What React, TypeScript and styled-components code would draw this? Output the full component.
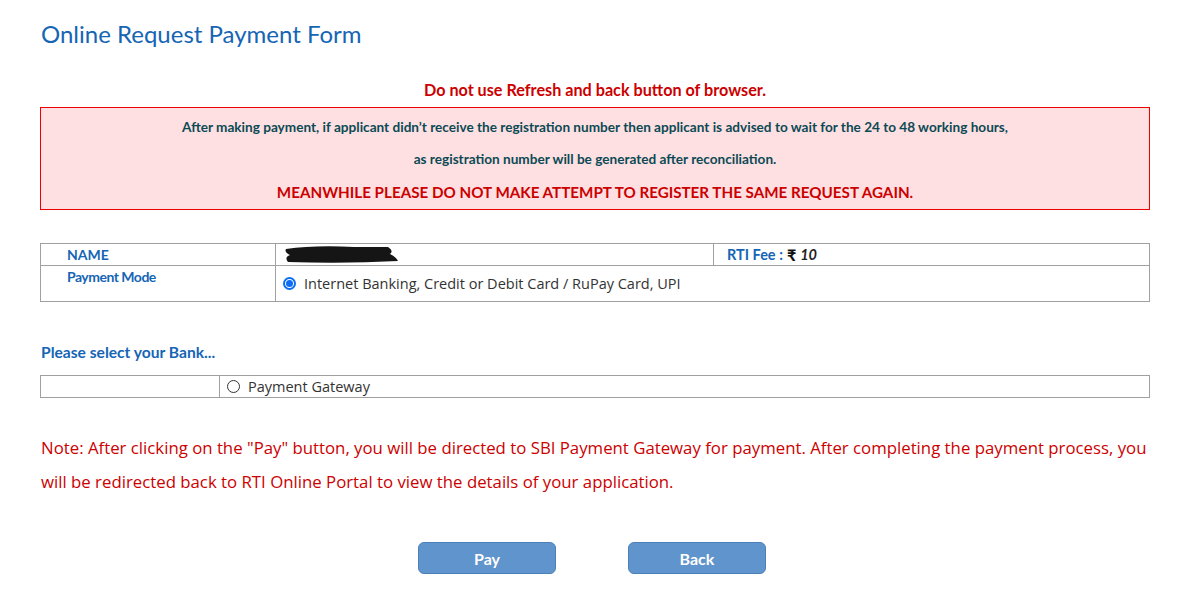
import React from 'react';
import styled, { createGlobalStyle } from 'styled-components';

const GlobalStyle = createGlobalStyle`
  body {
    margin: 0;
    background: #fff;
    font-family: 'Open Sans', 'Noto Sans', sans-serif;
  }
`;

const Page = styled.div`
  padding: 19px 50px 30px 40px;
`;

const Title = styled.h1`
  margin: 0 0 0 1px;
  font-family: Lato, 'Liberation Sans', sans-serif;
  font-weight: 400;
  font-size: 24px;
  color: #1565b5;
`;

const Warning = styled.p`
  margin: 32px 0 8px;
  text-align: center;
  font-family: Lato, 'Liberation Sans', sans-serif;
  font-weight: 700;
  font-size: 16.2px;
  color: #cc0000;
`;

const AlertBox = styled.div`
  border: 1px solid #ee0000;
  background: #ffe0e2;
  padding: 3px 0 0;
  text-align: center;
  font-family: Lato, 'Liberation Sans', sans-serif;
  font-weight: 700;
`;

const AlertLine = styled.p<{ $big?: boolean }>`
  margin: 0;
  line-height: ${(p) => (p.$big ? '34px' : '32px')};
  font-size: ${(p) => (p.$big ? '15.2px' : '13.6px')};
  color: ${(p) => (p.$big ? '#cc0000' : '#0b4a55')};
`;

const Table = styled.table`
  width: 100%;
  border-collapse: collapse;
  table-layout: fixed;
`;

const Cell = styled.td<{ $w?: number; $top?: boolean }>`
  border: 1px solid #a0a0a0;
  padding: 0;
  width: ${(p) => (p.$w ? `${p.$w}px` : 'auto')};
  vertical-align: ${(p) => (p.$top ? 'top' : 'middle')};
`;

const FormTable = styled(Table)`
  margin-top: 33px;
`;

const Label = styled.span<{ $tight?: boolean }>`
  display: block;
  padding-left: 26px;
  font-family: Lato, 'Liberation Sans', sans-serif;
  font-weight: 700;
  font-size: 14px;
  color: #1565b5;
  letter-spacing: ${(p) => (p.$tight ? '-0.5px' : '0')};
  line-height: 20px;
  padding-top: ${(p) => (p.$tight ? '1px' : '0')};
`;

const Fee = styled.span`
  display: flex;
  align-items: center;
  gap: 4px;
  padding-left: 13px;
  font-family: Lato, 'Liberation Sans', sans-serif;
  font-weight: 700;
  font-size: 14.5px;
  color: #1565b5;
  line-height: 20px;

  em {
    color: #222;
    font-style: italic;
  }
  b {
    color: #111;
    font-size: 16px;
  }
`;

const Redacted = styled.svg`
  display: block;
  margin-left: 8px;
`;

const RadioLabel = styled.label<{ $pad: number }>`
  display: flex;
  align-items: center;
  gap: 8px;
  padding-left: ${(p) => p.$pad}px;
  font-size: 14.5px;
  color: #333;
  height: 100%;
`;

const Radio = styled.span<{ $checked?: boolean }>`
  width: 13px;
  height: 13px;
  border-radius: 50%;
  box-sizing: border-box;
  border: ${(p) => (p.$checked ? '2px solid #0b6ef5' : '1px solid #333')};
  background: #fff;
  display: inline-flex;
  align-items: center;
  justify-content: center;
  flex-shrink: 0;

  &::after {
    content: '';
    width: 7px;
    height: 7px;
    border-radius: 50%;
    background: ${(p) => (p.$checked ? '#0b6ef5' : 'transparent')};
  }
`;

const BankHeading = styled.p`
  margin: 40px 0 13px 1px;
  font-family: Lato, 'Liberation Sans', sans-serif;
  font-weight: 700;
  font-size: 15.6px;
  line-height: 20px;
  color: #1565b5;
`;

const Note = styled.p`
  margin: 33px -8px 0 1px;
  font-size: 16.8px;
  line-height: 34px;
  color: #cc0000;
`;

const Buttons = styled.div`
  display: flex;
  justify-content: center;
  gap: 72px;
  margin: 43px 0 0 -6px;
`;

const Button = styled.button`
  width: 138px;
  height: 32px;
  border: 1px solid #4b7fb9;
  border-radius: 6px;
  background: #6094cd;
  color: #fff;
  font-family: Lato, 'Liberation Sans', sans-serif;
  font-weight: 700;
  font-size: 16px;
  cursor: pointer;
`;

export default function App() {
  return (
    <>
      <GlobalStyle />
      <Page>
        <Title>Online Request Payment Form</Title>
        <Warning>Do not use Refresh and back button of browser.</Warning>
        <AlertBox>
          <AlertLine>
            After making payment, if applicant didn’t receive the registration number then applicant is advised to wait for the 24 to 48 working hours,
          </AlertLine>
          <AlertLine>as registration number will be generated after reconciliation.</AlertLine>
          <AlertLine $big>MEANWHILE PLEASE DO NOT MAKE ATTEMPT TO REGISTER THE SAME REQUEST AGAIN.</AlertLine>
        </AlertBox>

        <FormTable>
          <tbody>
            <tr style={{ height: 22 }}>
              <Cell $w={234}>
                <Label>NAME</Label>
              </Cell>
              <Cell $w={437}>
                <Redacted width="120" height="19" viewBox="0 0 120 19">
                  <path d="M2 4 Q30 0 70 2 L104 2 Q110 6 106 9 Q112 12 114 16 Q60 19 4 17 Q0 12 6 10 Q0 7 2 4 Z" fill="#151515" />
                </Redacted>
              </Cell>
              <Cell>
                <Fee>
                  RTI Fee : <b>₹</b>
                  <em>10</em>
                </Fee>
              </Cell>
            </tr>
            <tr style={{ height: 36 }}>
              <Cell $top>
                <Label $tight>Payment Mode</Label>
              </Cell>
              <Cell colSpan={2}>
                <RadioLabel $pad={7}>
                  <Radio $checked />
                  Internet Banking, Credit or Debit Card / RuPay Card, UPI
                </RadioLabel>
              </Cell>
            </tr>
          </tbody>
        </FormTable>

        <BankHeading>Please select your Bank...</BankHeading>
        <Table>
          <tbody>
            <tr style={{ height: 22 }}>
              <Cell $w={178} />
              <Cell>
                <RadioLabel $pad={7}>
                  <Radio />
                  Payment Gateway
                </RadioLabel>
              </Cell>
            </tr>
          </tbody>
        </Table>

        <Note>
          Note: After clicking on the "Pay" button, you will be directed to SBI Payment Gateway for payment. After completing the payment process, you will be redirected back to RTI Online Portal to view the details of your application.
        </Note>

        <Buttons>
          <Button>Pay</Button>
          <Button>Back</Button>
        </Buttons>
      </Page>
    </>
  );
}
